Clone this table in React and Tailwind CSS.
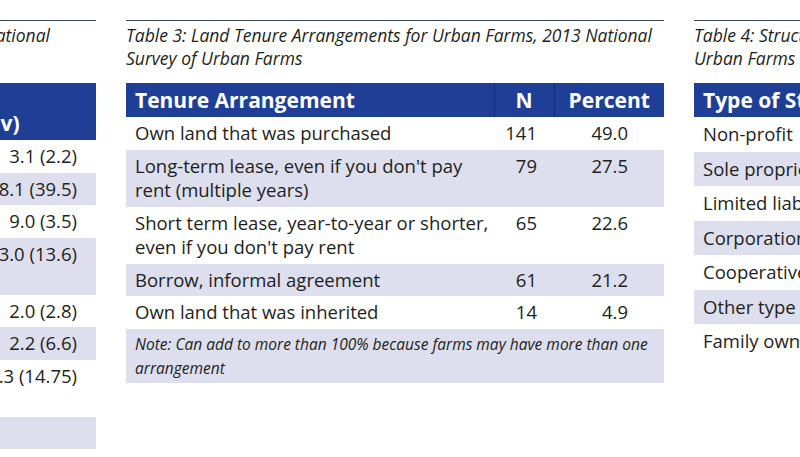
import React from 'react';

const tenure = [
  { label: ['Own land that was purchased'], n: '141', pct: '49.0' },
  { label: ["Long-term lease, even if you don't pay", 'rent (multiple years)'], n: '79', pct: '27.5' },
  { label: ['Short term lease, year-to-year or shorter,', "even if you don't pay rent"], n: '65', pct: '22.6' },
  { label: ['Borrow, informal agreement'], n: '61', pct: '21.2' },
  { label: ['Own land that was inherited'], n: '14', pct: '4.9' },
];

const stats = [
  { label: ['Years farming at site'], value: '3.1 (2.2)' },
  { label: ['Total farm area (sq. ft.)'], value: '78.1 (39.5)' },
  { label: ['Number of sites farmed'], value: '9.0 (3.5)' },
  { label: ['Paid staff, full and part time', '(average per farm)'], value: '3.0 (13.6)' },
  { label: ['Volunteers per week'], value: '2.0 (2.8)' },
  { label: ['Interns per season'], value: '2.2 (6.6)' },
  { label: ['Hours worked per week', 'by the operator'], value: '8.3 (14.75)' },
  { label: ['Sales outlets used'], value: '' },
];

const structures = [
  'Non-profit',
  'Sole proprietorship',
  'Limited liability company',
  'Corporation',
  'Cooperative',
  'Other type of structure',
  'Family owned',
];

function Lines({ lines }) {
  return lines.map((line, i) => (
    <React.Fragment key={i}>
      {i > 0 && <br />}
      {line}
    </React.Fragment>
  ));
}

function Rule() {
  return <div className="h-px bg-[#3a4858]" />;
}

export default function App() {
  return (
    <div className="w-[800px] h-[457px] overflow-hidden bg-white text-[#231f20] font-['Open_Sans',sans-serif]">
      <div className="flex gap-[30px] ml-[-441px] pt-[20px]">
        {/* Table 2, cut off on the left */}
        <div className="w-[537px] shrink-0">
          <Rule />
          <div className="mt-[3px] mb-[13px] text-[17.5px] italic leading-[23px] whitespace-nowrap">
            <div className="w-[491px] text-right">Table 2: Characteristics of Urban Farms, 2013 National</div>
            <div>Survey of Urban Farms</div>
          </div>
          <table className="w-full table-fixed border-collapse">
            <colgroup>
              <col className="w-[357px]" />
              <col className="w-[180px]" />
            </colgroup>
            <thead>
              <tr className="bg-[#1f3f96] text-white">
                <th className="px-[9px] py-[5px] text-left align-bottom text-[21px] font-bold leading-[23.5px]">Characteristic</th>
                <th className="pl-[10px] py-[5px] text-left text-[21px] font-bold leading-[23.5px] whitespace-nowrap">
                  Mean
                  <br />
                  (Std Dev)
                </th>
              </tr>
            </thead>
            <tbody>
              {stats.map((row, i) => (
                <tr key={i} className={i % 2 === 1 ? 'bg-[#dddeee]' : ''}>
                  <td className="px-[9px] py-[4px] text-[18.5px] leading-[24.5px] align-top whitespace-nowrap">
                    <Lines lines={row.label} />
                  </td>
                  <td className="pr-[19px] py-[4px] text-right text-[18.5px] leading-[24.5px] align-top whitespace-nowrap">
                    {row.value}
                  </td>
                </tr>
              ))}
            </tbody>
          </table>
        </div>

        {/* Table 3 */}
        <div className="w-[538px] shrink-0">
          <Rule />
          <div className="mt-[3px] mb-[13px] text-[17.5px] italic leading-[23px] whitespace-nowrap">
            Table 3: Land Tenure Arrangements for Urban Farms, 2013 National
            <br />
            Survey of Urban Farms
          </div>
          <table className="w-full table-fixed border-collapse">
            <colgroup>
              <col className="w-[368px]" />
              <col className="w-[60px]" />
              <col className="w-[110px]" />
            </colgroup>
            <thead>
              <tr className="bg-[#1f3f96] text-white text-[21px] font-bold leading-[24px]">
                <th className="h-[34px] px-[9px] text-left">Tenure Arrangement</th>
                <th className="h-[34px] text-center border-l border-[#132f78]">N</th>
                <th className="h-[34px] text-center border-l border-[#132f78]">Percent</th>
              </tr>
            </thead>
            <tbody className="text-[18.5px] leading-[24.5px]">
              {tenure.map((row, i) => (
                <tr key={i} className={i % 2 === 1 ? 'bg-[#dddeee]' : ''}>
                  <td className="px-[9px] py-[4px] align-top whitespace-nowrap">
                    <Lines lines={row.label} />
                  </td>
                  <td className="pr-[17px] py-[4px] text-right align-top">{row.n}</td>
                  <td className="pr-[36px] py-[4px] text-right align-top">{row.pct}</td>
                </tr>
              ))}
              <tr className="bg-[#dddeee]">
                <td colSpan={3} className="px-[9px] py-[3px] text-[15.5px] italic leading-[24px] whitespace-nowrap">
                  Note: Can add to more than 100% because farms may have more than one
                  <br />
                  arrangement
                </td>
              </tr>
            </tbody>
          </table>
        </div>

        {/* Table 4, cut off on the right */}
        <div className="w-[537px] shrink-0">
          <Rule />
          <div className="mt-[3px] mb-[13px] text-[17.5px] italic leading-[23px] whitespace-nowrap">
            Table 4: Structure of Business Arrangements for
            <br />
            Urban Farms
          </div>
          <table className="w-full table-fixed border-collapse">
            <colgroup>
              <col className="w-[368px]" />
              <col className="w-[60px]" />
              <col className="w-[109px]" />
            </colgroup>
            <thead>
              <tr className="bg-[#1f3f96] text-white text-[21px] font-bold leading-[24px]">
                <th className="h-[34px] px-[9px] text-left">Type of Structure</th>
                <th className="h-[34px] text-center border-l border-[#132f78]">N</th>
                <th className="h-[34px] text-center border-l border-[#132f78]">Percent</th>
              </tr>
            </thead>
            <tbody className="text-[18.5px] leading-[24.5px]">
              {structures.map((label, i) => (
                <tr key={label} className={i % 2 === 1 ? 'bg-[#dddeee]' : ''}>
                  <td colSpan={3} className="px-[9px] py-[5px] whitespace-nowrap">{label}</td>
                </tr>
              ))}
            </tbody>
          </table>
        </div>
      </div>
    </div>
  );
}
